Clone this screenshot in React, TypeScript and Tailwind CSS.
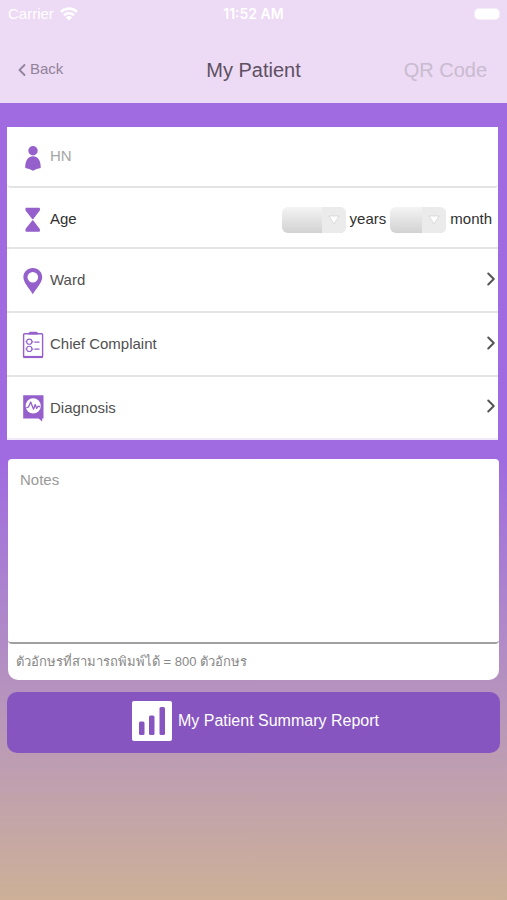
import type { ReactNode } from "react";
import { ChevronLeft, ChevronRight } from "lucide-react";

function PersonIcon() {
  return (
    <svg viewBox="0 0 22 28" className="w-[22px] h-7" fill="#9560cb" aria-hidden="true">
      <circle cx="11" cy="7.800" r="4.700" />
      <path d="M3.300 25C3 18.500 5.500 13.200 11 13.200S19 18.500 18.700 25c-2.700.5-5.200 1.400-7.700 2.700-2.500-1.300-5-2.200-7.700-2.700Z" />
    </svg>
  );
}

function HourglassIcon() {
  return (
    <svg viewBox="0 0 22 28" className="w-[22px] h-7" fill="#9560cb" stroke="#9560cb" strokeWidth="1.400" strokeLinejoin="round" aria-hidden="true">
      <path d="M4.200 2.500h13v1.700L10.800 12.600 4.200 4.200Z" />
      <path d="M4.200 25h13v-1.700L10.800 14.900 4.200 23.300Z" />
    </svg>
  );
}

function PinIcon() {
  return (
    <svg viewBox="0 0 22 28" className="w-[22px] h-7" fill="#9560cb" aria-hidden="true">
      <path fillRule="evenodd" d="M10.800 1C5.500 1 1.400 5 1.400 10.200c0 5.300 5.800 11 9.400 17 3.600-6 9.400-11.700 9.400-17C20.200 5 16.100 1 10.800 1Zm0 3.900a5.300 5.300 0 1 1 0 10.600 5.300 5.300 0 0 1 0-10.600Z" />
    </svg>
  );
}

function ClipboardIcon() {
  return (
    <svg viewBox="0 0 22 28" className="w-[22px] h-7" fill="none" stroke="#9560cb" aria-hidden="true">
      <rect x="1.600" y="2.800" width="19" height="23.400" rx="1" strokeWidth="1.400" />
      <path d="M1.500 26h19.200" strokeWidth="2.200" />
      <path d="M6.500 3.600V2l1.500-1.200h6.600L16.100 2v1.600Z" fill="#9560cb" stroke="none" />
      <circle cx="7.300" cy="10.700" r="2.600" strokeWidth="1.100" />
      <circle cx="7.300" cy="17.900" r="2.600" strokeWidth="1.100" />
      <path d="M3.600 10.700h1.200M3.600 17.900h1.200M9.900 10.900h1.400M9.900 18.100h1.400M12.300 11.200h5.200M12.300 18.200h5.200" strokeWidth="1.300" />
    </svg>
  );
}

function DiagnosisIcon() {
  return (
    <svg viewBox="0 0 22 28" className="w-[22px] h-7" aria-hidden="true">
      <path d="M1.200 1.300h20.300v23.300h-1.300V27.500l-3.600-2.900H1.200Z" fill="#9560cb" />
      <circle cx="11.200" cy="11.800" r="7.600" fill="#fff" />
      <path d="M4.300 13.800 6.500 13 8.700 8 11.500 15.200 13.200 10.500 14.700 14.500 16 12.200 18 12.800" fill="none" stroke="#9560cb" strokeWidth="1.300" strokeLinejoin="round" />
    </svg>
  );
}

function ReportIcon() {
  return (
    <svg viewBox="0 0 40 40" className="size-10" aria-hidden="true">
      <rect width="40" height="40" rx="2" fill="#fff" />
      <g fill="#8655c0">
        <rect x="7" y="20.500" width="5.500" height="13.500" rx="1.500" />
        <rect x="17" y="14.500" width="5.500" height="19.500" rx="1.500" />
        <rect x="27.500" y="6" width="5.500" height="28" rx="1.500" />
      </g>
    </svg>
  );
}

function StatusBar() {
  return (
    <div className="flex h-7 items-center px-2 text-white">
      <div className="flex flex-1 items-center gap-1.5">
        <span className="text-[15px]">Carrier</span>
        <svg viewBox="0 0 18 14" className="w-[18px] h-3.5" fill="none" stroke="#fff" strokeWidth="2.600" aria-hidden="true">
          <path d="M1 4.900a11.500 11.500 0 0 1 16 0" />
          <path d="M4 8.300a7.200 7.200 0 0 1 10 0" />
          <path d="M9 13.500 5.800 10.400a4.600 4.600 0 0 1 6.400 0Z" fill="#fff" stroke="none" />
        </svg>
      </div>
      <span className="font-[Inter,sans-serif] text-sm font-semibold">11:52 AM</span>
      <div className="flex flex-1 justify-end">
        <span className="h-2.5 w-6 rounded-sm bg-white ring-1 ring-white/50" />
      </div>
    </div>
  );
}

function LinkRow({ icon, label }: { icon: ReactNode; label: string }) {
  return (
    <a href="#" className="flex h-16 items-center gap-1.5 border-b-2 border-[#e4e4e6] pt-px pl-[15px] last:h-[63px] last:border-[#f0eaf8] text-[#505050]">
      {icon}
      <span className="flex-1">{label}</span>
      <ChevronRight className="-mr-1 mb-1 size-[22px]" strokeWidth={2.2} color="#555" />
    </a>
  );
}

function AgeSelect({ label, wide }: { label: string; wide?: boolean }) {
  return (
    <label className="flex items-center gap-1">
      <span className="relative flex">
        <select
          className={`h-[26px] appearance-none rounded-md bg-linear-to-b from-[#f4f4f4] to-[#d2d2d2] ${wide ? "w-16" : "w-14"}`}
        >
          <option value=""></option>
        </select>
        <span className="pointer-events-none absolute inset-y-0 right-0 flex w-6 items-center justify-center rounded-r-md bg-[#ebebeb]">
          <svg viewBox="0 0 12 10" className="w-3 h-2.5" aria-hidden="true">
            <path d="M1 1h10L6 9Z" fill="#fff" stroke="#d0d0d0" strokeWidth="0.700" />
          </svg>
        </span>
      </span>
      {label}
    </label>
  );
}

export default function App() {
  return (
    <div className="flex min-h-screen flex-col bg-[#a06be0] font-['Liberation_Sans',Arial,sans-serif] text-[15px]">
      <header className="bg-[#eddaf4] pb-2.5">
        <StatusBar />
        <nav className="mt-3.5 flex h-[51px] items-center pt-1 pr-5 pl-3">
          <div className="flex flex-1">
            <a href="#" className="flex items-center text-[#91839a]">
              <ChevronLeft className="-mr-0.5 size-5" strokeWidth={2.2} />
              Back
            </a>
          </div>
          <h1 className="pl-2 text-xl text-[#5c5062]">My Patient</h1>
          <div className="flex flex-1 justify-end">
            <button type="button" className="text-xl text-[#c9bbd0]">QR Code</button>
          </div>
        </nav>
      </header>

      <main className="flex-1 bg-linear-to-b from-[#a06be0] from-45% to-[#cdb097] px-[7px] pt-6">
        {/* Patient details */}
        <section className="mr-0.5 bg-white">
          <label className="flex h-[61px] items-center gap-1.5 rounded-b border-b-2 border-[#e4e4e6] pl-[15px]">
            <PersonIcon />
            <input
              type="text"
              placeholder="HN"
              aria-label="HN"
              className="min-w-0 flex-1 bg-transparent outline-none placeholder:text-[#a5a5a5]"
            />
          </label>
          <div className="flex h-[61px] items-center gap-1.5 border-b-2 border-[#e4e4e6] pt-1 pr-1.5 pl-[15px] text-[#303030]">
            <HourglassIcon />
            <span className="flex-1">Age</span>
            <div className="flex gap-1">
              <AgeSelect label="years" wide />
              <AgeSelect label="month" />
            </div>
          </div>
          <LinkRow icon={<PinIcon />} label="Ward" />
          <LinkRow icon={<ClipboardIcon />} label="Chief Complaint" />
          <LinkRow icon={<DiagnosisIcon />} label="Diagnosis" />
        </section>

        {/* Notes */}
        <section className="mt-[19px] mr-px ml-px overflow-hidden rounded-t rounded-b-[10px] bg-white">
          <textarea
            placeholder="Notes"
            aria-label="Notes"
            className="block h-[185px] w-full resize-none rounded-b border-b-2 border-[#a0a0a0] px-3 py-2.5 outline-none placeholder:text-[#999]"
          />
          <p className="flex h-9 items-center px-2 text-[13px] text-[#888]">ตัวอักษรที่สามารถพิมพ์ได้ = 800 ตัวอักษร</p>
        </section>

        <button
          type="button"
          className="mt-3 flex h-[61px] w-full items-center justify-center gap-1.5 rounded-[10px] bg-[#8655c0] pb-1 pl-1 text-base text-white"
        >
          <ReportIcon />
          My Patient Summary Report
        </button>
      </main>
    </div>
  );
}
